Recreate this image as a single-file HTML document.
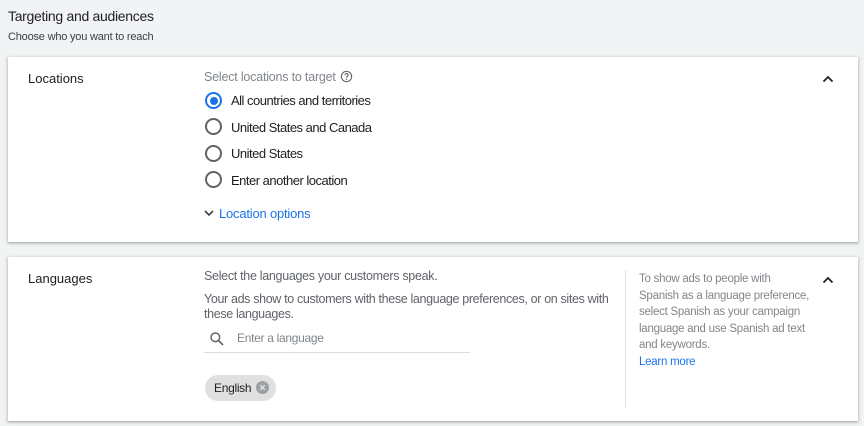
<!DOCTYPE html>
<html><head><style>
*{margin:0;padding:0;box-sizing:border-box}
body{width:864px;height:426px;background:#f1f3f4;font-family:"Liberation Sans",Arial,sans-serif;position:relative;overflow:hidden;color:#202124}
.a{position:absolute;white-space:nowrap}
.card{position:absolute;left:8px;width:850px;background:#fff;box-shadow:0 1px 2px rgba(60,64,67,.3),0 1px 3px 1px rgba(60,64,67,.15)}
.radio{position:absolute;width:17px;height:17px;border:2px solid #5f6368;border-radius:50%}
.sel{border-color:#1a73e8}
.sel:after{content:"";position:absolute;left:2.5px;top:2.5px;width:8px;height:8px;border-radius:50%;background:#1a73e8}
.lbl{font-size:13px;letter-spacing:-.5px}
.g{color:#5f6368}
</style></head><body>
<div class="a" style="left:8px;top:8px;font-size:14px;letter-spacing:-.3px">Targeting and audiences</div>
<div class="a g" style="left:8px;top:31px;font-size:11px;color:#3c4043;letter-spacing:-.2px">Choose who you want to reach</div>

<div class="card" style="top:57px;height:185px"></div>
<div class="a" style="left:28px;top:71px;font-size:13px">Locations</div>
<div class="a g lbl" style="left:204px;top:70px;font-size:12.5px;color:#80868b;letter-spacing:-.2px">Select locations to target</div>
<svg class="a" style="left:340px;top:70px" width="13" height="13" viewBox="0 0 24 24"><circle cx="12" cy="12" r="9.5" fill="none" stroke="#5f6368" stroke-width="2"/><path d="M9.3 9.5a2.8 2.8 0 1 1 4 2.5c-1 .5-1.3 1-1.3 2" fill="none" stroke="#5f6368" stroke-width="2"/><circle cx="12" cy="17" r="1.2" fill="#5f6368"/></svg>
<div class="radio sel" style="left:205px;top:92px"></div>
<div class="a lbl" style="left:231px;top:93px">All countries and territories</div>
<div class="radio" style="left:205px;top:118px"></div>
<div class="a lbl" style="left:231px;top:120px">United States and Canada</div>
<div class="radio" style="left:205px;top:145px"></div>
<div class="a lbl" style="left:231px;top:146px">United States</div>
<div class="radio" style="left:205px;top:171px"></div>
<div class="a lbl" style="left:231px;top:173px">Enter another location</div>
<svg class="a" style="left:204px;top:209px" width="10" height="8" viewBox="0 0 10 8"><path d="M1 2l4 4 4-4" fill="none" stroke="#3c4043" stroke-width="1.6"/></svg>
<div class="a" style="left:219px;top:206px;font-size:13px;color:#1a73e8;letter-spacing:-.2px">Location options</div>
<svg class="a" style="left:822px;top:75px" width="12" height="8" viewBox="0 0 12 8"><path d="M1.5 6.5L6 2l4.5 4.5" fill="none" stroke="#202124" stroke-width="1.8"/></svg>

<div class="card" style="top:257px;height:164px"></div>
<div class="a" style="left:28px;top:271px;font-size:13px">Languages</div>
<div class="a g" style="left:204px;top:269px;font-size:12.5px;letter-spacing:-.3px">Select the languages your customers speak.</div>
<div class="a g" style="left:204px;top:292px;font-size:12.5px;letter-spacing:-.35px;line-height:15px">Your ads show to customers with these language preferences, or on sites with<br>these languages.</div>
<svg class="a" style="left:209px;top:331px" width="16" height="16" viewBox="0 0 24 24"><circle cx="9.5" cy="9.5" r="6.5" fill="none" stroke="#5f6368" stroke-width="2.2"/><path d="M14.5 14.5L21 21" stroke="#5f6368" stroke-width="2.4"/></svg>
<div class="a g" style="left:237px;top:331px;font-size:12px;letter-spacing:-.3px;color:#80868b">Enter a language</div>
<div class="a" style="left:204px;top:352px;width:266px;height:1px;background:#dadce0"></div>
<div class="a" style="left:205px;top:375px;width:71px;height:26px;border-radius:13px;background:#e0e0e0"></div>
<div class="a" style="left:214px;top:381px;font-size:12px;letter-spacing:-.3px">English</div>
<svg class="a" style="left:256px;top:381px" width="13" height="13" viewBox="0 0 14 14"><circle cx="7" cy="7" r="7" fill="#9aa0a6"/><path d="M4.5 4.5l5 5M9.5 4.5l-5 5" stroke="#e0e0e0" stroke-width="1.5"/></svg>
<div class="a" style="left:625px;top:270px;width:1px;height:138px;background:#e0e0e0"></div>
<div class="a g" style="left:639px;top:271px;font-size:11.5px;line-height:16.5px;letter-spacing:-.25px;color:#80868b">To show ads to people with<br>Spanish as a language preference,<br>select Spanish as your campaign<br>language and use Spanish ad text<br>and keywords.<br><span style="color:#1a73e8">Learn more</span></div>
<svg class="a" style="left:822px;top:276px" width="12" height="8" viewBox="0 0 12 8"><path d="M1.5 6.5L6 2l4.5 4.5" fill="none" stroke="#202124" stroke-width="1.8"/></svg>
</body></html>
